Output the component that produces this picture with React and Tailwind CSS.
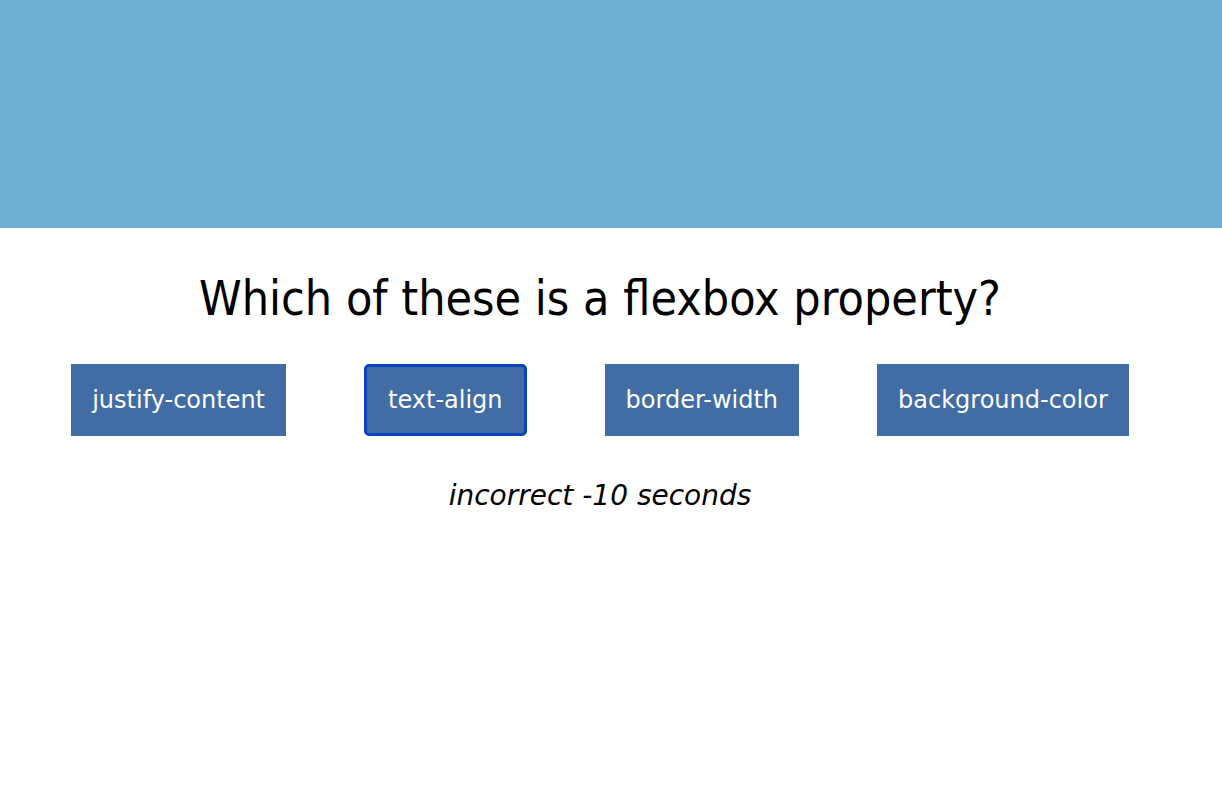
import React from 'react';

const answers = ['justify-content', 'text-align', 'border-width', 'background-color'];

const App = () => {
  // the answer the player picked
  const picked = 'text-align';

  return (
    <div className="min-h-screen bg-white font-['DejaVu_Sans',sans-serif]">
      <header className="h-[228px] w-full bg-[#6eafd6]" />
      <main className="w-[1200px] flex flex-col items-center">
        <h1 className="mt-[40px] text-[48px] leading-[60px] text-black [font-stretch:condensed]">
          Which of these is a flexbox property?
        </h1>
        <div className="mt-[36px] flex justify-center gap-[78px]">
          {answers.map((a) => (
            <button
              key={a}
              className={`h-[72px] px-[21px] bg-[#426ca4] text-white text-[24px] ${
                a === picked ? 'border-[3px] border-[#0b46c1] rounded-[5px]' : ''
              }`}
            >
              {a}
            </button>
          ))}
        </div>
        <p className="mt-[40px] text-[28px] italic text-black leading-[40px]">incorrect -10 seconds</p>
      </main>
    </div>
  );
};

export default App;
